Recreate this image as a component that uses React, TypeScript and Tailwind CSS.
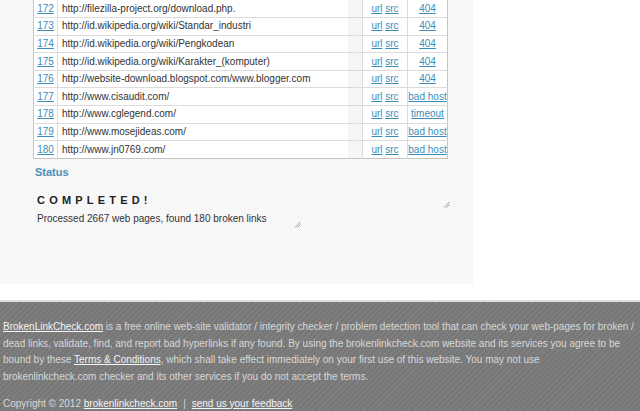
import React from "react";

const rows: [string, string, string][] = [
  ["172", "http://filezilla-project.org/download.php.", "404"],
  ["173", "http://id.wikipedia.org/wiki/Standar_industri", "404"],
  ["174", "http://id.wikipedia.org/wiki/Pengkodean", "404"],
  ["175", "http://id.wikipedia.org/wiki/Karakter_(komputer)", "404"],
  ["176", "http://website-download.blogspot.com/www.blogger.com", "404"],
  ["177", "http://www.cisaudit.com/", "bad host"],
  ["178", "http://www.cglegend.com/", "timeout"],
  ["179", "http://www.mosejideas.com/", "bad host"],
  ["180", "http://www.jn0769.com/", "bad host"],
];

function Grip() {
  return (
    <svg width="7" height="7" viewBox="0 0 7 7" className="absolute">
      <line x1="1" y1="6.5" x2="6.5" y2="1" stroke="#9a9a9a" strokeWidth="1" />
      <line x1="3.5" y1="6.5" x2="6.5" y2="3.5" stroke="#9a9a9a" strokeWidth="1" />
    </svg>
  );
}

export default function App() {
  return (
    <div
      className="w-[640px] h-[411px] bg-white overflow-hidden flex flex-col"
      style={{ fontFamily: '"Liberation Sans", Arial, sans-serif' }}
    >
      <div className="w-[473px] h-[284px] bg-[#f7f7f7] pl-[33px] shrink-0">
        <table className="w-[414px] table-fixed border-collapse border border-t-0 border-[#c4c4c4] text-[10px] leading-none">
          <colgroup>
            <col className="w-[24px]" />
            <col className="w-[305px]" />
            <col className="w-[45px]" />
            <col className="w-[40px]" />
          </colgroup>
          <tbody>
            {rows.map(([n, url, st], i) => (
              <tr key={n} className={i === 0 ? "h-[17.6px]" : "h-[17.6px] border-t border-[#dcdcdc]"}>
                <td className="bg-white text-center border-r border-[#dcdcdc] p-0 whitespace-nowrap">
                  <a className="text-[#3b8db6] underline">{n}</a>
                </td>
                <td className="p-0 border-r border-[#dcdcdc] bg-[#f6f6f6]">
                  <div className="w-[290px] h-[16.6px] bg-white flex items-center pl-[4px] text-[#333] whitespace-nowrap overflow-hidden">
                    {url}
                  </div>
                </td>
                <td className="bg-white text-center border-r border-[#dcdcdc] p-0 whitespace-nowrap">
                  <a className="text-[#3b8db6] underline">url</a>{" "}
                  <a className="text-[#3b8db6] underline">src</a>
                </td>
                <td className="bg-white text-center p-0 whitespace-nowrap">
                  <a className="text-[#3b8db6] underline">{st}</a>
                </td>
              </tr>
            ))}
          </tbody>
        </table>
        <div className="mt-[6px] pl-[2px] text-[11px] font-bold text-[#4a8fba] leading-[14px]">Status</div>
        <div className="relative w-[417px] h-[29px] mt-[2px]">
          <div className="pt-[13px] pl-[4px] text-[11px] font-bold tracking-[4.2px] text-[#222] leading-[12px]">
            COMPLETED!
          </div>
          <div className="absolute right-[0px] bottom-[2px] w-[7px] h-[7px]">
            <Grip />
          </div>
        </div>
        <div className="relative w-[268px] h-[18px]">
          <div className="pt-[3px] pl-[4px] text-[10px] text-[#333] leading-[12px] whitespace-nowrap">
            Processed 2667 web pages, found 180 broken links
          </div>
          <div className="absolute right-[0px] bottom-[0px] w-[7px] h-[7px]">
            <Grip />
          </div>
        </div>
      </div>
      <div className="h-[16px] shrink-0" />
      <div className="h-[2px] bg-[#dedede] shrink-0" />
      <div
        className="flex-1 pl-[3px] pt-[17px] text-[10px] leading-[16.7px] text-[#d8d8d8]"
        style={{
          backgroundImage:
            "repeating-linear-gradient(135deg, #7e7e7e 0px, #7e7e7e 2px, #777777 2px, #777777 4px)",
        }}
      >
        <p className="whitespace-nowrap">
          <a className="text-[#f4f4f4] underline">BrokenLinkCheck.com</a> is a free online web-site validator / integrity checker / problem detection tool that can check your web-pages for broken /
          <br />
          dead links, validate, find, and report bad hyperlinks if any found. By using the brokenlinkcheck.com website and its services you agree to be
          <br />
          bound by these <a className="text-[#f4f4f4] underline">Terms &amp; Conditions</a>, which shall take effect immediately on your first use of this website. You may not use
          <br />
          brokenlinkcheck.com checker and its other services if you do not accept the terms.
        </p>
        <p className="mt-[10px] whitespace-nowrap">
          Copyright © 2012 <a className="text-[#f4f4f4] underline">brokenlinkcheck.com</a>
          <span className="mx-[6px]">|</span>
          <a className="text-[#f4f4f4] underline">send us your feedback</a>
        </p>
      </div>
    </div>
  );
}
